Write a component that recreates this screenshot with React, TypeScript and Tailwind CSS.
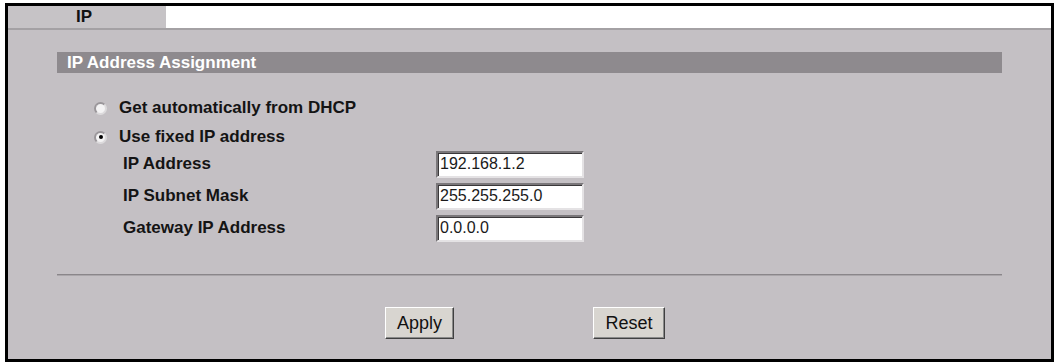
import React from "react";

const font = { fontFamily: '"Liberation Sans", Arial, sans-serif' };

function Radio({ checked }: { checked?: boolean }) {
  return (
    <div className="w-[13px] h-[13px] rounded-full bg-[#f4f3f4] border-2 border-t-[#9a969a] border-l-[#9a969a] border-r-[#dcdadc] border-b-[#dcdadc] flex items-center justify-center shrink-0">
      {checked && <div className="w-[4px] h-[4px] rounded-full bg-black" />}
    </div>
  );
}

function Field({ label, value }: { label: string; value: string }) {
  return (
    <div className="h-[32px] flex items-center pl-[115px]">
      <div className="w-[313px] text-[17px] font-bold text-[#141414]">{label}</div>
      <div className="w-[148px] h-[27px] bg-white border-2 border-t-[#7a777a] border-l-[#7a777a] border-r-[#e4e2e4] border-b-[#e4e2e4] shadow-[inset_1px_1px_0_#3a383a] flex items-center pl-[2px] text-[16px] text-[#1a1a1a]">
        {value}
      </div>
    </div>
  );
}

function Btn({ label, w }: { label: string; w: string }) {
  return (
    <div
      className={`${w} h-[32px] bg-[#d8d5d0] border border-t-white border-l-white border-r-[#404040] border-b-[#404040] shadow-[inset_-1px_-1px_0_#8a8a8a] flex items-center justify-center text-[18px] text-[#111]`}
    >
      {label}
    </div>
  );
}

export default function App() {
  return (
    <div className="w-[1056px] h-[362px] bg-white pt-[3px] pl-[5px]" style={font}>
      <div className="w-[1049px] h-[359px] border-[3px] border-black flex flex-col">
        <div className="h-[22px] flex bg-white shrink-0">
          <div className="w-[158px] h-full bg-[#c6c3c6] flex items-center pl-[68px] text-[17px] font-bold text-[#111]">
            IP
          </div>
        </div>
        <div className="h-[2px] bg-[#a4a1a4] shrink-0" />
        <div className="flex-1 bg-[#c4c0c4] flex flex-col">
          <div className="mt-[22px] mx-[49px] h-[21px] bg-[#8e8a8e] flex items-center pl-[10px] text-[17px] font-bold text-white">
            IP Address Assignment
          </div>
          <div className="mt-[21px] h-[28px] flex items-center pl-[86px] gap-[12px]">
            <Radio />
            <span className="text-[17px] font-bold text-[#141414]">Get automatically from DHCP</span>
          </div>
          <div className="h-[26px] pt-[4px] flex items-center pl-[86px] gap-[12px]">
            <Radio checked />
            <span className="text-[17px] font-bold text-[#141414]">Use fixed IP address</span>
          </div>
          <Field label="IP Address" value="192.168.1.2" />
          <Field label="IP Subnet Mask" value="255.255.255.0" />
          <Field label="Gateway IP Address" value="0.0.0.0" />
          <div className="mt-[30px] mx-[49px] h-[1px] bg-[#8a868a]" />
          <div className="mx-[49px] h-[1px] bg-[#aaa6aa]" />
          <div className="mt-[31px] flex pl-[377px]">
            <Btn label="Apply" w="w-[69px]" />
            <div className="w-[139px]" />
            <Btn label="Reset" w="w-[72px]" />
          </div>
        </div>
      </div>
    </div>
  );
}
